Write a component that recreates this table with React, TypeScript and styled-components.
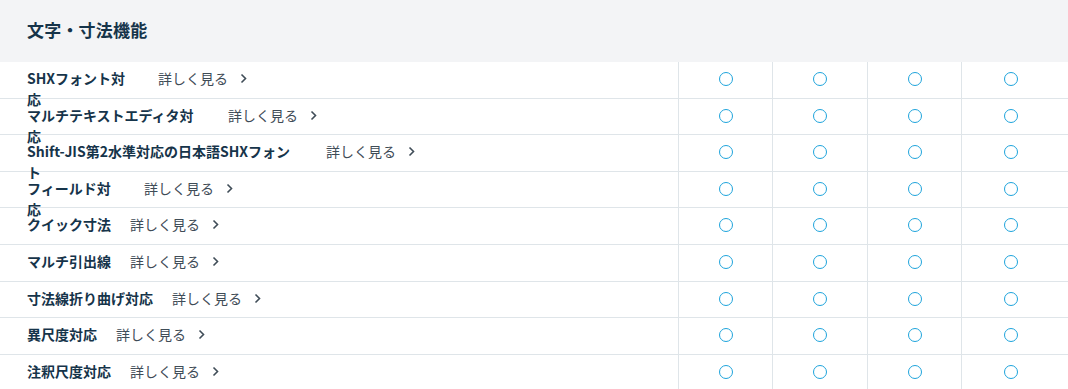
import styled, { createGlobalStyle } from "styled-components";

const GlobalStyle = createGlobalStyle`
  html, body {
    margin: 0;
    padding: 0;
    background: #ffffff;
  }
  body {
    font-family: "Noto Sans CJK JP", "Noto Sans", sans-serif;
    color: #1a3547;
  }
`;

const Section = styled.section`
  width: 1068px;
`;

const Header = styled.div`
  height: 62px;
  background: #f3f4f6;
  display: flex;
  align-items: center;
  padding: 0 0 4px 27px;
  box-sizing: border-box;
`;

const Title = styled.h2`
  margin: 0;
  font-size: 17px;
  font-weight: 700;
  color: #16344a;
  letter-spacing: 0.2px;
`;

const Row = styled.div`
  display: grid;
  grid-template-columns: 678px 94px 95px 94px 99px 1fr;
  grid-template-rows: 35.6px;
  height: 36.6px;
  box-sizing: border-box;
  border-bottom: 1px solid #dfe5e9;
`;

const NameCell = styled.div`
  display: flex;
  align-items: flex-start;
  padding: 6px 0 0 27px;
  box-sizing: border-box;
`;

const Label = styled.div<{ $width?: number }>`
  font-size: 14px;
  font-weight: 700;
  line-height: 21px;
  color: #16344a;
  white-space: pre-line;
  flex-shrink: 0;
  width: ${(p) => (p.$width ? `${p.$width}px` : "auto")};
`;

const More = styled.a`
  margin-left: 19px;
  display: inline-flex;
  align-items: center;
  gap: 12px;
  font-size: 14px;
  line-height: 21px;
  color: #3f4c57;
  text-decoration: none;
  white-space: nowrap;
  cursor: pointer;
`;

const MarkCell = styled.div`
  display: flex;
  justify-content: center;
  align-items: flex-start;
  padding-top: 10px;
  box-sizing: border-box;
  border-left: 1px solid #dfe5e9;
`;

const Spacer = styled.div``;

const Circle = styled.span`
  width: 14px;
  height: 14px;
  box-sizing: border-box;
  border: 1.6px solid #1ea4dc;
  border-radius: 50%;
`;

const Chevron = () => (
  <svg width="7" height="11" viewBox="0 0 7 11" fill="none">
    <path d="M1.5 1.5L5.5 5.5L1.5 9.5" stroke="#3f4c57" strokeWidth="1.6" />
  </svg>
);

const features: { name: string; width?: number }[] = [
  { name: "SHXフォント対\n応", width: 112 },
  { name: "マルチテキストエディタ対\n応", width: 182 },
  { name: "Shift-JIS第2水準対応の日本語SHXフォン\nト", width: 280 },
  { name: "フィールド対\n応", width: 98 },
  { name: "クイック寸法" },
  { name: "マルチ引出線" },
  { name: "寸法線折り曲げ対応" },
  { name: "異尺度対応" },
  { name: "注釈尺度対応" },
];

function App() {
  return (
    <>
      <GlobalStyle />
      <Section>
        <Header>
          <Title>文字・寸法機能</Title>
        </Header>
        {features.map((f, i) => (
          <Row key={i}>
            <NameCell>
              <Label $width={f.width}>{f.name}</Label>
              <More>
                詳しく見る
                <Chevron />
              </More>
            </NameCell>
            {[0, 1, 2, 3].map((c) => (
              <MarkCell key={c}>
                <Circle />
              </MarkCell>
            ))}
            <Spacer />
          </Row>
        ))}
      </Section>
    </>
  );
}

export default App;
